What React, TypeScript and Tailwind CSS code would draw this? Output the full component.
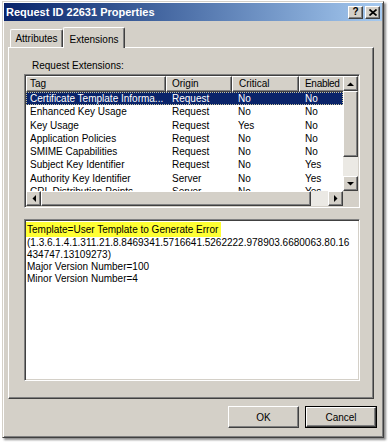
const raised =
  "border border-t-white border-l-white border-r-[#404040] border-b-[#404040] shadow-[inset_-1px_-1px_0_#808080]";
const sunken =
  "border border-t-[#808080] border-l-[#808080] border-r-white border-b-white shadow-[inset_1px_1px_0_#404040,inset_-1px_-1px_0_#d4d0c8] p-px";

type Dir = "up" | "down" | "left" | "right";

function Arrow({ dir }: { dir: Dir }) {
  const pts = {
    up: "0,4 7,4 3.5,0.5",
    down: "0,0 7,0 3.5,3.5",
    left: "4,0 4,7 0.5,3.5",
    right: "0,0 0,7 3.5,3.5",
  }[dir];
  const vertical = dir === "up" || dir === "down";
  return (
    <svg width={vertical ? 7 : 4} height={vertical ? 4 : 7} viewBox={vertical ? "0 0 7 4" : "0 0 4 7"}>
      <polygon points={pts} fill="#000" />
    </svg>
  );
}

function ArrowButton({ dir }: { dir: Dir }) {
  return (
    <div className={`w-[15px] h-[15px] shrink-0 bg-[#d4d0c8] flex items-center justify-center ${raised}`}>
      <Arrow dir={dir} />
    </div>
  );
}

const rows = [
  ["Certificate Template Informa...", "Request", "No", "No"],
  ["Enhanced Key Usage", "Request", "No", "No"],
  ["Key Usage", "Request", "Yes", "No"],
  ["Application Policies", "Request", "No", "No"],
  ["SMIME Capabilities", "Request", "No", "No"],
  ["Subject Key Identifier", "Request", "No", "Yes"],
  ["Authority Key Identifier", "Server", "No", "Yes"],
  ["CRL Distribution Points", "Server", "No", "Yes"],
];

const cols = [
  { name: "Tag", w: "w-[140px]", pad: "pl-[3px]" },
  { name: "Origin", w: "w-[66px]", pad: "pl-[5px]" },
  { name: "Critical", w: "w-[67px]", pad: "pl-[6px]" },
  { name: "Enabled", w: "w-[60px]", pad: "pl-[5px] tracking-[-0.3px]" },
];

function ExtensionsList() {
  return (
    <div className={`w-[336px] h-[134px] bg-white ${sunken}`}>
      <div className="flex flex-col h-full">
        <div className="flex h-[115px]">
          <div className="w-[317px] overflow-hidden">
            <div className="flex h-[16px] w-[333px]">
              {cols.map((c) => (
                <div
                  key={c.name}
                  className={`${c.w} ${c.pad} shrink-0 h-[16px] bg-[#d4d0c8] leading-[14px] ${raised}`}
                >
                  {c.name}
                </div>
              ))}
            </div>
            {rows.map((r, i) => (
              <div
                key={r[0]}
                className={`flex h-[13.3px] leading-[13px] w-[317px] ${
                  i === 0 ? "bg-[#0a246a] text-white outline-1 outline-dotted outline-[#c8c49c] -outline-offset-1" : ""
                }`}
              >
                {r.map((cell, j) => (
                  <div
                    key={j}
                    className={`${cols[j].w} shrink-0 whitespace-nowrap overflow-hidden ${
                      j === 0 ? "pl-[4px]" : "pl-[6px]"
                    }`}
                  >
                    {cell}
                  </div>
                ))}
              </div>
            ))}
          </div>
          <div className="w-[15px] flex flex-col">
            <ArrowButton dir="up" />
            <div className={`h-[66px] bg-[#d4d0c8] ${raised}`} />
            <div className="flex-1 bg-[#ebe9e4]" />
            <ArrowButton dir="down" />
          </div>
        </div>
        <div className="flex h-[15px]">
          <ArrowButton dir="left" />
          <div className={`w-[270px] bg-[#d4d0c8] ${raised}`} />
          <div className="w-[17px] bg-[#ebe9e4]" />
          <ArrowButton dir="right" />
          <div className="w-[15px] bg-[#d4d0c8]" />
        </div>
      </div>
    </div>
  );
}

function DetailsBox() {
  return (
    <div className={`w-[336px] h-[162px] bg-white ${sunken}`}>
      <div className="pt-px leading-[12px] whitespace-nowrap">
        <div className="inline-block h-[15px] leading-[15px] bg-[#ffff33] pl-px pr-[3px]">
          Template=User Template to Generate Error
        </div>
        <div className="pl-px">(1.3.6.1.4.1.311.21.8.8469341.5716641.5262222.978903.6680063.80.16</div>
        <div className="pl-px">434747.13109273)</div>
        <div className="pl-px">Major Version Number=100</div>
        <div className="pl-px">Minor Version Number=4</div>
      </div>
    </div>
  );
}

export default function App() {
  return (
    <div className="w-[388px] h-[443px] bg-white overflow-hidden font-['Liberation_Sans',Arial,sans-serif] text-[10px] text-black">
      <div className="ml-[2px] mt-[1px] w-[382px] h-[437px] bg-[#d4d0c8] border border-t-[#d4d0c8] border-l-[#d4d0c8] border-r-[#404040] border-b-[#404040] shadow-[inset_1px_1px_0_#fff,inset_-1px_-1px_0_#808080,2px_2px_2px_rgba(0,0,0,0.45)] p-px flex flex-col">
        <div className="h-[18px] shrink-0 flex items-center justify-between pl-[2px] pr-[2px] bg-linear-to-r from-[#0a246a] to-[#a6caf0]">
          <span className="text-white font-bold text-[11px] leading-none">Request ID 22631 Properties</span>
          <div className="flex gap-[2px]">
            <div className={`w-[15px] h-[13px] bg-[#d4d0c8] flex items-center justify-center font-bold text-[10px] leading-none ${raised}`}>
              ?
            </div>
            <div className={`w-[15px] h-[13px] bg-[#d4d0c8] flex items-center justify-center ${raised}`}>
              <svg width="8" height="7" viewBox="0 0 8 7">
                <path d="M0.5 0.5 L7.5 6.5 M7.5 0.5 L0.5 6.5" stroke="#000" strokeWidth="1.7" />
              </svg>
            </div>
          </div>
        </div>

        <div className="flex items-end h-[20px] mt-[6px] ml-[5px] relative z-10">
          <div className="w-[53px] h-[18px] ml-px border-t border-l border-t-white border-l-white border-r border-r-[#404040] shadow-[inset_-1px_0_0_#808080] rounded-t-[2px] bg-[#d4d0c8] flex items-center justify-center">
            Attributes
          </div>
          <div className="w-[62px] h-[21px] -mb-px border-t border-l border-t-white border-l-white border-r border-r-[#404040] shadow-[inset_-1px_0_0_#808080] rounded-t-[2px] bg-[#d4d0c8] flex items-start justify-center pt-[4px]">
            Extensions
          </div>
        </div>

        <div className={`ml-[4px] w-[366px] h-[352px] bg-[#d4d0c8] flex flex-col ${raised}`}>
          <div className="ml-[23px] mt-[11px] h-[13px] leading-[13px]">Request Extensions:</div>
          <div className="ml-[15px] mt-[2px]">
            <ExtensionsList />
          </div>
          <div className="ml-[15px] mt-[11px]">
            <DetailsBox />
          </div>
        </div>

        <div className="flex justify-end gap-[6px] mt-[7px] pr-[5px]">
          <div className={`w-[71px] h-[22px] bg-[#d4d0c8] flex items-center justify-center ${raised}`}>OK</div>
          <div className="w-[72px] h-[22px] border border-black">
            <div className={`w-full h-full bg-[#d4d0c8] flex items-center justify-center ${raised}`}>Cancel</div>
          </div>
        </div>
      </div>
    </div>
  );
}
